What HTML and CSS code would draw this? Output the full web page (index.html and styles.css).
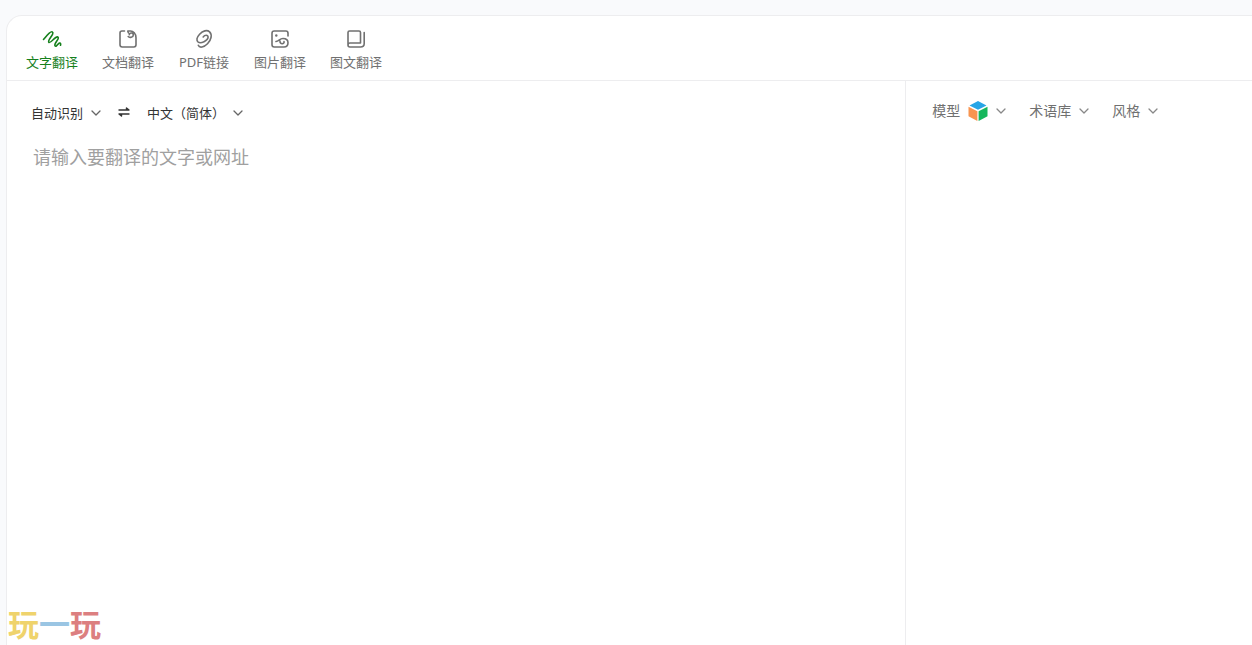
FILE: index.html
```html
<!DOCTYPE html>
<html lang="zh-CN">
<head>
<meta charset="utf-8">
<title>文字翻译</title>
<link rel="stylesheet" href="styles.css">
</head>
<body>
<main class="card">
  <nav class="tabs">
    <button type="button" class="tab active">
      <svg class="tab-icon" viewBox="0 0 20 20"><path d="M1.500 10.500C4.500 7 8 2 10.300 2.900C13.200 4.200 5 11.500 6.800 13.300C8.700 15 13.500 6.600 15.800 8C18.200 9.600 11.500 14.500 13 16.800C14.300 18.500 16 14.500 17.500 14C18.800 13.800 18.800 15.200 18.500 16.300"/></svg>
      <span>文字翻译</span>
    </button>
    <button type="button" class="tab">
      <svg class="tab-icon" viewBox="0 0 20 20"><path d="M6.500 2H4Q2 2 2 4V15.800Q2 18 4.200 18H15.800Q18 18 18 15.800V8.800C18 4.500 15.200 2 12.500 2H9.800C9.500 2.200 10 3 10.500 4M10.200 7.500C11.500 9 15.300 8.300 15.300 5.900C15.300 3.300 11.500 3.300 11.300 5.800"/></svg>
      <span>文档翻译</span>
    </button>
    <button type="button" class="tab">
      <svg class="tab-icon" viewBox="0 0 20 20"><path d="M4.300 16.200C5.500 19.500 10 18.300 13.500 14.800C17.200 11 18.500 5.800 15.600 2.900C13 .5 8.800 1.800 5.600 5.200C2.700 8.300 2 11.500 4.200 13.100C6.700 14.800 13.900 12 14.100 8.300C14.200 5.700 10.800 5.700 9.200 8"/></svg>
      <span>PDF链接</span>
    </button>
    <button type="button" class="tab">
      <svg class="tab-icon" viewBox="0 0 20 20"><path d="M18 7V4.200Q18 2 15.800 2H4.200Q2 2 2 4.200V15.800Q2 18 4.200 18H14C16.800 18 18 16.200 18 13.800C18 11 15.800 9.500 13 9.500C9.800 9.500 8.800 12 6 12.500M10 12C9.800 13.800 10.800 14.800 12.200 14.800C13.500 14.800 14.400 13.700 14 12.500"/><circle class="dot" cx="6.300" cy="6.500" r="1.200"/></svg>
      <span>图片翻译</span>
    </button>
    <button type="button" class="tab">
      <svg class="tab-icon" viewBox="0 0 20 20"><path d="M14.500 14V3.500Q14.500 2 13 2H3.500Q2 2 2 3.500V15.500M14.500 14H4C1.300 14 1.300 18 4 18H14.500Q18.200 18 18.200 14.500V3.500"/></svg>
      <span>图文翻译</span>
    </button>
  </nav>
  <div class="panes">
    <section class="source">
      <div class="languages">
        <label class="language">
          <select aria-label="源语言"><option>自动识别</option></select>
          <svg class="chevron" viewBox="0 0 10 10"><path d="M1 3L5 7L9 3"/></svg>
        </label>
        <button type="button" class="swap" aria-label="交换语言">
          <svg viewBox="0 0 12 12"><path d="M1 3H11L8.500 1V3M11 7H1L3.500 9V7"/></svg>
        </button>
        <label class="language">
          <select aria-label="目标语言"><option>中文（简体）</option></select>
          <svg class="chevron" viewBox="0 0 10 10"><path d="M1 3L5 7L9 3"/></svg>
        </label>
      </div>
      <textarea class="input" aria-label="原文" placeholder="请输入要翻译的文字或网址"></textarea>
    </section>
    <section class="result">
      <div class="options">
        <button type="button" class="option">模型
          <svg class="cube" viewBox="0 0 20 20"><path fill="#27a5e6" d="M10 0L18.500 4.500L10 8.800L1.500 4.500Z"/><path fill="#f89550" d="M.5 5.800L9.400 10.200V20L.5 15.200Z"/><path fill="#16b75c" d="M19.500 5.800L10.600 10.200V20L19.500 15.200Z"/></svg>
          <svg class="chevron" viewBox="0 0 10 10"><path d="M1 3L5 7L9 3"/></svg>
        </button>
        <button type="button" class="option">术语库
          <svg class="chevron" viewBox="0 0 10 10"><path d="M1 3L5 7L9 3"/></svg>
        </button>
        <button type="button" class="option">风格
          <svg class="chevron" viewBox="0 0 10 10"><path d="M1 3L5 7L9 3"/></svg>
        </button>
      </div>
    </section>
  </div>
</main>
<div class="watermark"><span class="yellow">玩</span><span class="blue">一</span><span class="red">玩</span></div>
</body>
</html>
```
FILE: styles.css
```css
* {
  box-sizing: border-box;
}

body {
  margin: 0;
  min-height: 100vh;
  padding: 15px 0 0 6px;
  display: flex;
  background: #f9fafc;
  font-family: "Noto Sans", "Noto Sans CJK SC", sans-serif;
  color: #707070;
}

button,
select,
textarea {
  margin: 0;
  padding: 0;
  border: 0;
  background: none;
  font: inherit;
  color: inherit;
}

svg {
  display: block;
  flex: none;
  fill: none;
  stroke: currentColor;
  stroke-linecap: round;
  stroke-linejoin: round;
}

.card {
  flex: 1;
  display: flex;
  flex-direction: column;
  background: #fff;
  border: 1px solid #ededef;
  border-width: 1px 0 0 1px;
  border-radius: 16px 0 0 0;
}

.tabs {
  display: flex;
  padding: 13px 7px 8px;
  border-bottom: 1px solid #ededef;
}

.tab {
  width: 76px;
  display: flex;
  flex-direction: column;
  align-items: center;
  gap: 3px;
  font-size: 13px;
  line-height: 20px;
}

.tab.active {
  color: #15801c;
}

.tab-icon {
  width: 20px;
  height: 20px;
  stroke-width: 1.6;
}

.dot {
  fill: currentColor;
  stroke: none;
}

.panes {
  flex: 1;
  display: grid;
  grid-template-columns: 13fr 5fr;
}

.source {
  display: flex;
  flex-direction: column;
  padding: 22px 24px;
  border-right: 1px solid #ededef;
}

.languages {
  display: flex;
  align-items: center;
  gap: 17px;
  font-size: 13px;
  line-height: 20px;
  color: #333;
}

.language {
  display: flex;
  align-items: center;
  gap: 7px;
}

.language select {
  appearance: none;
}

.chevron {
  width: 10px;
  height: 10px;
  color: #888;
  stroke-width: 1.3;
}

.languages .chevron {
  color: #666;
}

.swap svg {
  width: 12px;
  height: 12px;
  stroke-width: 1.4;
}

.input {
  flex: 1;
  margin-top: 20px;
  padding: 0 2px;
  resize: none;
  outline: none;
  font-size: 18px;
  line-height: 28px;
  color: #333;
}

.input::placeholder {
  color: #a0a0a0;
  opacity: 1;
}

.result {
  padding: 20px 26px;
}

.options {
  display: flex;
  gap: 23px;
  font-size: 14px;
  line-height: 20px;
}

.option {
  display: flex;
  align-items: center;
  gap: 8px;
  white-space: nowrap;
}

.cube {
  width: 20px;
  height: 20px;
  stroke: none;
}

.watermark {
  position: absolute;
  left: 8px;
  bottom: 4px;
  font-family: "Noto Sans CJK SC", sans-serif;
  font-size: 31px;
  font-weight: 700;
  line-height: 36px;
}

.yellow {
  color: #efd36c;
}

.blue {
  color: #9ac5e3;
}

.red {
  color: #dc7f80;
}
```
